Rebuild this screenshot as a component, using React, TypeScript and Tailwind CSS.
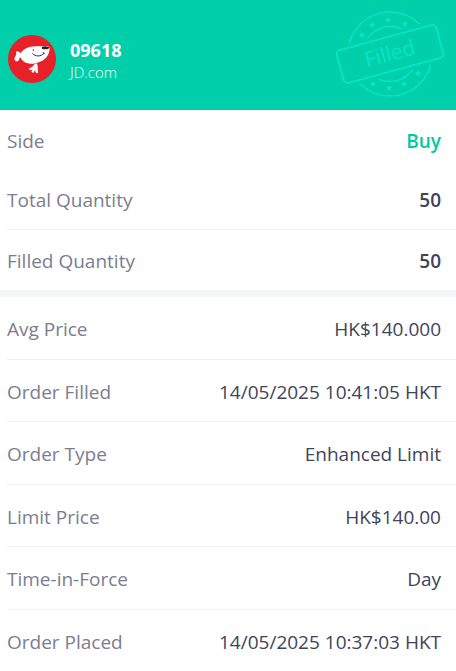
type Detail = { label: string; value: string; tone?: string };

const summary: Detail[] = [
  { label: "Side", value: "Buy", tone: "font-semibold text-[#00c9a2]" },
  { label: "Total Quantity", value: "50", tone: "font-semibold text-[#41435a]" },
  { label: "Filled Quantity", value: "50", tone: "font-semibold text-[#41435a]" },
];

const details: Detail[] = [
  { label: "Avg Price", value: "HK$140.000" },
  { label: "Order Filled", value: "14/05/2025 10:41:05 HKT" },
  { label: "Order Type", value: "Enhanced Limit" },
  { label: "Limit Price", value: "HK$140.00" },
  { label: "Time-in-Force", value: "Day" },
  { label: "Order Placed", value: "14/05/2025 10:37:03 HKT" },
];

const stars = [
  [-28, -19], [-18, -29], [-2, -34], [15, -30],
  [-17, 30], [-1, 34], [14, 30], [28, 19],
];

function CompanyLogo() {
  return (
    <svg viewBox="12 11 144 144" className="size-12 shrink-0" role="img" aria-label="JD.com logo">
      <circle cx="84" cy="83" r="72" fill="#e62129" />
      <path
        d="M50 65C60 52 74 46 94 45C106 44 115 46 124 44C135 43 139 49 136 58C133 76 121 87 106 92C88 100 68 99 57 89C52 84 50 79 48 78C45 82 46 90 40 90C32 90 29 84 33 77C37 71 38 67 36 62C38 57 45 61 50 65Z"
        fill="#fff"
      />
      <ellipse cx="124" cy="49" rx="11" ry="4.5" fill="#2a2020" />
      <circle cx="88" cy="56" r="2.2" fill="#2a2020" />
      <path d="M86 67C94 76 110 77 120 66M117 63L122 68" fill="none" stroke="#2a2020" strokeWidth="2.8" strokeLinecap="round" />
      <path
        d="M93 98L98 97L100 104L101 124L96 124L94 114L87 124L84 121L87 114L78 116L76 112L86 107Z"
        fill="#fff"
        stroke="#fff"
        strokeWidth="2"
        strokeLinejoin="round"
      />
    </svg>
  );
}

function FilledStamp() {
  return (
    <svg viewBox="-56 -46 112 92" className="h-[92px] w-28 shrink-0" role="img" aria-label="Filled">
      <g fill="none" stroke="#00e8cb" strokeWidth="1.6">
        <circle r="42" />
        <circle r="27.5" />
      </g>
      {stars.map(([x, y]) => (
        <path
          key={`${x},${y}`}
          transform={`translate(${x} ${y})`}
          d="M0-3.6L1-1.2L3.5-1.1L1.6.5L2.2 3L0 1.6L-2.2 3L-1.6.5L-3.5-1.1L-1-1.2Z"
          fill="#00e8cb"
        />
      ))}
      <g transform="rotate(-15.3)">
        <rect x="-56" y="-21" width="112" height="42" fill="#00cfa9" />
        <rect x="-51.5" y="-17" width="103" height="34" rx="4" fill="none" stroke="#00e8cb" strokeWidth="1.8" />
        <text y="7" textAnchor="middle" fill="#00e8cb" className="text-[21px]">
          Filled
        </text>
      </g>
    </svg>
  );
}

export default function App() {
  return (
    <main className="bg-white font-['Open_Sans','Noto_Sans',sans-serif] text-[19px] leading-6 text-[#41435a]">
      <header className="flex h-[110px] items-center justify-between bg-[#00cfa9] pr-[10px] pb-[2px] pl-2">
        <div className="flex items-center gap-[14px] pt-[10px]">
          <CompanyLogo />
          <div className="pt-[2px] text-white">
            <h1 className="text-[18px] leading-6 font-bold">09618</h1>
            <p className="text-[15px] leading-5 font-light">JD.com</p>
          </div>
        </div>
        <FilledStamp />
      </header>

      <dl className="border-b-[7px] border-[#f4f5f9] pl-[7px]">
        {summary.map((row) => (
          <div
            key={row.label}
            className="flex h-[60px] items-center justify-between border-[#f0f0f3] pt-px pr-[15px] nth-2:border-b"
          >
            <dt className="text-[#7b7d90]">{row.label}</dt>
            <dd className={row.tone}>{row.value}</dd>
          </div>
        ))}
      </dl>

      <dl className="pl-[7px]">
        {details.map((row) => (
          <div
            key={row.label}
            className="flex items-center justify-between border-b border-[#f0f0f3] pt-[2px] pr-[15px] odd:h-[63px] even:h-[62px] last:h-[61px] last:border-b-0"
          >
            <dt className="text-[#7b7d90]">{row.label}</dt>
            <dd>{row.value}</dd>
          </div>
        ))}
      </dl>
    </main>
  );
}
